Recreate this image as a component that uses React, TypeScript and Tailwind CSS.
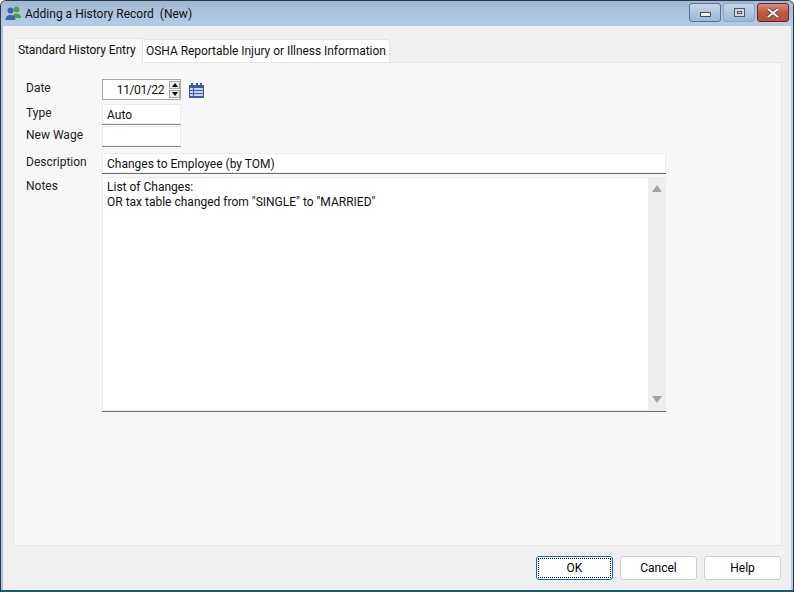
import React from 'react';

function UsersIcon() {
  return (
    <svg width="17" height="15" viewBox="0 0 17 15">
      <circle cx="11.5" cy="3.5" r="2.8" fill="#4c9a4a" />
      <path d="M7.5 12c0-3 1.6-4.5 4-4.5s4.5 1.5 4.5 4.5z" fill="#4c9a4a" />
      <circle cx="5.5" cy="4.5" r="3" fill="#3b62ad" />
      <path d="M0.5 14c0-3.4 2-5 5-5s5 1.600 5 5z" fill="#3b62ad" />
    </svg>
  );
}

function CalendarIcon() {
  return (
    <svg width="15" height="16" viewBox="0 0 15 16" shapeRendering="crispEdges">
      <rect x="0" y="3" width="15" height="13" fill="#3f5aa6" />
      <rect x="2" y="1" width="2" height="3" fill="#3f5aa6" />
      <rect x="6.500" y="1" width="2" height="3" fill="#3f5aa6" />
      <rect x="11" y="1" width="2" height="3" fill="#3f5aa6" />
      {[6, 9, 12].map((y) =>
        [1, 5, 8, 11].map((x) => (
          <rect key={`${x}-${y}`} x={x} y={y} width="2.500" height="2" fill="#c9d4ee" />
        ))
      )}
    </svg>
  );
}

function CaptionButton({ kind }: { kind: 'min' | 'max' | 'close' }) {
  if (kind === 'close') {
    return (
      <div className="flex h-[19px] w-[32px] items-center justify-center rounded-[3px] border border-[#5a2a35] bg-gradient-to-b from-[#d98b78] via-[#c4553f] to-[#b8503c]">
        <svg width="14" height="10" viewBox="0 0 14 10">
          <path d="M2 1l10 8M12 1L2 9" stroke="#474747" strokeWidth="3.600" />
          <path d="M2 1l10 8M12 1L2 9" stroke="#f1f1f1" strokeWidth="2.200" />
        </svg>
      </div>
    );
  }
  return (
    <div
      className={`flex h-[19px] items-center justify-center rounded-[3px] border bg-gradient-to-b from-[#c3d6ea] to-[#9db9d6] ${
        kind === 'min' ? 'w-[32px] border-[#5d7089]' : 'w-[32px] border-[#8ba4bf]'
      }`}
    >
      {kind === 'min' ? (
        <div className="mt-[4px] h-[5px] w-[11px] border border-[#4a4a55] bg-[#f2f2f2]" />
      ) : (
        <div className="flex h-[9px] w-[11px] items-center justify-center border border-[#55555f] bg-[#c9d6e4]">
          <div className="h-[3px] w-[5px] border border-[#55555f]" />
        </div>
      )}
    </div>
  );
}

function FieldLabel({ children }: { children: React.ReactNode }) {
  return <div className="w-[76px] shrink-0 pt-px text-[12px] leading-[16px] text-[#222]">{children}</div>;
}

function Spinner() {
  return (
    <div className="flex w-[11px] flex-col gap-px">
      <div className="flex h-[8px] items-center justify-center border border-[#a8a8a8] bg-[#ededed]">
        <div className="h-0 w-0 border-x-[3px] border-b-[4px] border-x-transparent border-b-black" />
      </div>
      <div className="flex h-[8px] items-center justify-center border border-[#a8a8a8] bg-[#ededed]">
        <div className="h-0 w-0 border-x-[3px] border-t-[4px] border-x-transparent border-t-black" />
      </div>
    </div>
  );
}

function DialogButton({ label, active }: { label: string; active?: boolean }) {
  return (
    <div
      className={`flex h-[24px] w-[77px] items-center justify-center rounded-[3px] border bg-white text-[12px] text-black ${
        active ? 'border-[#0a6cc4]' : 'border-[#d0d0d0]'
      }`}
    >
      {active ? (
        <div className="flex h-[20px] w-[73px] items-center justify-center border border-dotted border-black">{label}</div>
      ) : (
        label
      )}
    </div>
  );
}

export default function App() {
  return (
    <div
      className="flex h-[592px] w-[794px] flex-col overflow-hidden rounded-t-[6px] border border-b-2 border-[#2b3a47] border-b-[#1d5a6b] bg-[#f0f0f0]"
      style={{ fontFamily: 'Roboto, "Noto Sans", sans-serif' }}
    >
      {/* Title bar */}
      <div className="flex h-[25px] shrink-0 items-center bg-gradient-to-b from-[#a0b8d3] to-[#b6cde6] pl-[4px] pr-[4px]">
        <UsersIcon />
        <span className="ml-[3px] whitespace-pre text-[12px] text-[#111]">Adding a History Record  (New)</span>
        <div className="ml-auto mb-[2px] flex gap-[2px]">
          <CaptionButton kind="min" />
          <CaptionButton kind="max" />
          <CaptionButton kind="close" />
        </div>
      </div>

      <div className="flex min-h-0 flex-1 flex-col border-x-2 border-l-[#a9c3df] border-r-[#b6cde6] pl-[10px] pr-[9px] pt-[11px]">
        {/* Tabs */}
        <div className="z-10 flex h-[25px] shrink-0 items-end">
          <div className="-mb-px h-[25px] w-[130px] whitespace-nowrap rounded-t-[2px] border border-b-0 border-[#e4e4e4] bg-[#f7f7f7] pl-[4px] pt-[3px] text-[12px] leading-[16px] tracking-[-0.09px] text-[#111]">
            Standard History Entry
          </div>
          <div className="h-[23px] w-[247px] whitespace-nowrap rounded-t-[3px] border border-b-0 border-l-0 border-[#e4e4e4] bg-white pl-[3px] pt-[3px] text-[12px] leading-[16px] tracking-[-0.045px] text-[#111]">
            OSHA Reportable Injury or Illness Information
          </div>
        </div>

        {/* Panel */}
        <div className="flex h-[484px] shrink-0 flex-col border border-[#e4e4e4] bg-[#f7f7f7] pl-[12px] pt-[16px]">
          <div className="flex h-[22px] items-start">
            <FieldLabel>Date</FieldLabel>
            <div className="flex h-[21px] w-[79px] items-center justify-end border border-[#a8a8a8] bg-white text-[12px] tracking-[-0.4px] text-[#111]">
              <span className="mr-[5px]">11/01/22</span>
              <Spinner />
            </div>
            <div className="ml-[8px] mt-[3px]">
              <CalendarIcon />
            </div>
          </div>

          <div className="mt-[3px] flex h-[21px] items-start">
            <FieldLabel>Type</FieldLabel>
            <div className="h-[21px] w-[79px] border-b border-b-[#8a8a8a] bg-white pl-[5px] pt-[2px] text-[12px] leading-[18px] text-[#111] shadow-[inset_0_0_0_1px_#ececec]">
              Auto
            </div>
          </div>

          <div className="mt-[1px] flex h-[21px] items-start">
            <FieldLabel>New Wage</FieldLabel>
            <div className="h-[21px] w-[79px] border-b border-b-[#8a8a8a] bg-white shadow-[inset_0_0_0_1px_#ececec]" />
          </div>

          <div className="mt-[6px] flex h-[21px] items-start">
            <FieldLabel>Description</FieldLabel>
            <div className="h-[21px] w-[564px] border-b border-b-[#6f6f6f] bg-white pl-[5px] pt-[2px] text-[12px] leading-[18px] text-[#111] shadow-[inset_0_0_0_1px_#ececec]">
              Changes to Employee (by TOM)
            </div>
          </div>

          <div className="mt-[3px] flex h-[235px] items-start">
            <FieldLabel>Notes</FieldLabel>
            <div className="flex h-[235px] w-[564px] border-b border-b-[#6f6f6f] bg-white shadow-[inset_0_0_0_1px_#ececec]">
              <div className="flex-1 pl-[5px] pt-[3px] text-[12px] leading-[15px] text-[#111]">
                <div>List of Changes:</div>
                <div>OR tax table changed from "SINGLE" to "MARRIED"</div>
              </div>
              <div className="my-px mr-px flex w-[17px] flex-col items-center justify-between bg-[#eeeeee] py-[7px]">
                <div className="h-0 w-0 border-x-[5px] border-b-[7px] border-x-transparent border-b-[#a3a3a3]" />
                <div className="h-0 w-0 border-x-[5px] border-t-[7px] border-x-transparent border-t-[#a3a3a3]" />
              </div>
            </div>
          </div>
        </div>

        {/* Footer buttons */}
        <div className="mt-[10px] flex justify-end gap-[7px] pr-[1px]">
          <DialogButton label="OK" active />
          <DialogButton label="Cancel" />
          <DialogButton label="Help" />
        </div>
      </div>
    </div>
  );
}
